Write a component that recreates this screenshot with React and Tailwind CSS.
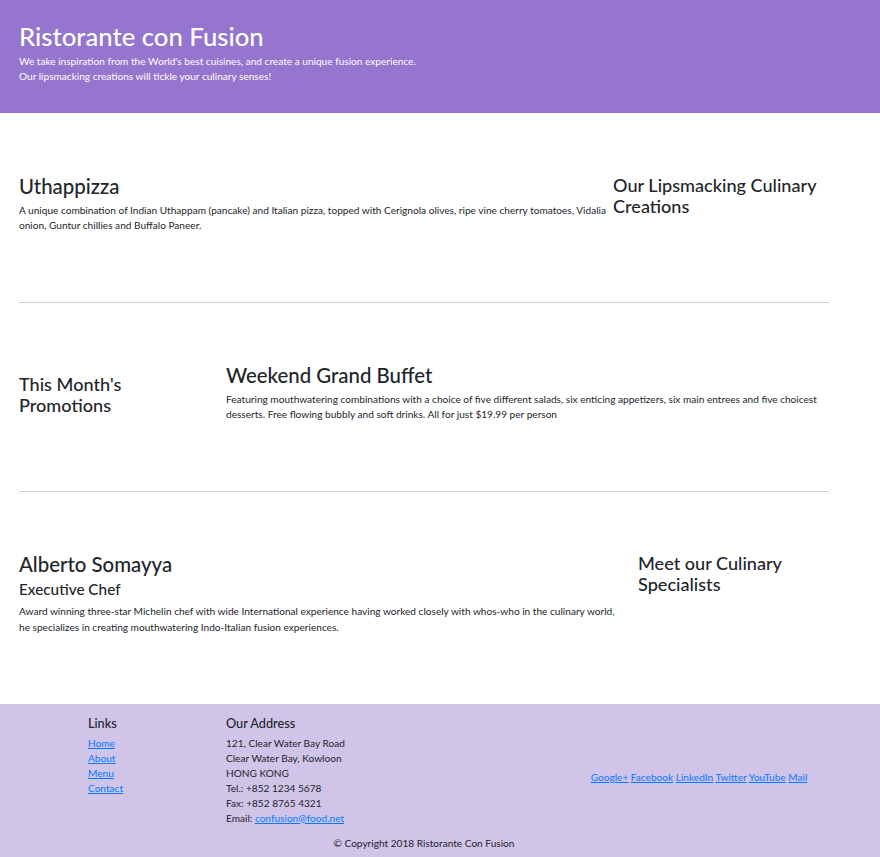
const socials = ['Google+', 'Facebook', 'LinkedIn', 'Twitter', 'YouTube', 'Mail'];
const links = ['Home', 'About', 'Menu', 'Contact'];

function Header() {
  return (
    <header className="bg-[#9575cd] h-[113px] pl-[19px] pt-[20px] text-white">
      <h1 className="text-[25.7px] leading-[32px] font-medium mb-[2px]">Ristorante con Fusion</h1>
      <p className="text-[10.1px] leading-[15px]">
        We take inspiration from the World's best cuisines, and create a unique fusion experience.
        <br />
        Our lipsmacking creations will tickle your culinary senses!
      </p>
    </header>
  );
}

// one row-content block; the border is the hr between blocks
function Section({ children, className }) {
  return <section className={`flex items-start pt-[60px] w-[810px] ml-[19px] ${className}`}>{children}</section>;
}

export default function App() {
  return (
    <div className="bg-white text-[#212529] font-['Lato',sans-serif] min-h-[857px]">
      <Header />

      <Section className="h-[190px] border-b border-[#cfcfcf]">
        <div className="w-[594px]">
          <h2 className="text-[20.4px] leading-[25px] font-medium mb-[4px] mt-[0.5px]">Uthappizza</h2>
          <p className="text-[10.1px] leading-[15px]">
            A unique combination of Indian Uthappam (pancake) and Italian pizza, topped with Cerignola olives, ripe vine cherry tomatoes, Vidalia onion, Guntur chillies and Buffalo Paneer.
          </p>
        </div>
        <div className="w-[216px] pt-[1.5px]">
          <h3 className="text-[18.1px] leading-[21px] font-medium">Our Lipsmacking Culinary Creations</h3>
        </div>
      </Section>

      <Section className="h-[189px] border-b border-[#cfcfcf]">
        <div className="w-[207px] mt-[11px] pr-[80px]">
          <h3 className="text-[18.1px] leading-[21px] font-medium">This Month's Promotions</h3>
        </div>
        <div className="w-[603px]">
          <h2 className="text-[20.4px] leading-[25px] font-medium mb-[4px]">Weekend Grand Buffet</h2>
          <p className="text-[10.1px] leading-[15px] pr-[10px]">
            Featuring mouthwatering combinations with a choice of five different salads, six enticing appetizers, six main entrees and five choicest desserts. Free flowing bubbly and soft drinks. All for just $19.99 per person
          </p>
        </div>
      </Section>

      <Section className="h-[212px]">
        <div className="w-[619px]">
          <h2 className="text-[20.4px] leading-[25px] font-medium mb-[3px]">Alberto Somayya</h2>
          <h4 className="text-[15.3px] leading-[19px] font-medium mb-[4px]">Executive Chef</h4>
          <p className="text-[10.1px] leading-[16px] pr-[17px]">
            Award winning three-star Michelin chef with wide International experience having worked closely with whos-who in the culinary world, he specializes in creating mouthwatering Indo-Italian fusion experiences.
          </p>
        </div>
        <div className="w-[191px] pt-[1px]">
          <h3 className="text-[18.1px] leading-[21px] font-medium">Meet our Culinary Specialists</h3>
        </div>
      </Section>

      <footer className="bg-[#d1c4e9] h-[153px] pt-[11px]">
        <div className="flex pl-[88px]">
          <div className="w-[138px]">
            <h5 className="text-[12.7px] leading-[16px] font-medium mb-[5px]">Links</h5>
            <ul className="text-[10.1px] leading-[15px]">
              {links.map((l) => (
                <li key={l}>
                  <a href="#" className="text-[#007bff] underline">{l}</a>
                </li>
              ))}
            </ul>
          </div>
          <div className="w-[330px]">
            <h5 className="text-[12.7px] leading-[16px] font-medium mb-[4.5px]">Our Address</h5>
            <address className="not-italic text-[10.1px] leading-[15px]">
              121, Clear Water Bay Road<br />
              Clear Water Bay, Kowloon<br />
              HONG KONG<br />
              Tel.: +852 1234 5678<br />
              Fax: +852 8765 4321<br />
              Email: <a href="#" className="text-[#007bff] underline">confusion@food.net</a>
            </address>
          </div>
          <div className="w-[286px] self-center mt-[14px] text-center text-[10.1px] leading-[15px]">
            {socials.map((s, i) => (
              <span key={s}>
                <a href="#" className="text-[#007bff] underline">{s}</a>
                {i < socials.length - 1 ? ' ' : ''}
              </span>
            ))}
          </div>
        </div>
        <div className="flex justify-center pr-[32px] mt-[10px] text-[10.1px] leading-[15px]">
          <p>© Copyright 2018 Ristorante Con Fusion</p>
        </div>
      </footer>
    </div>
  );
}
